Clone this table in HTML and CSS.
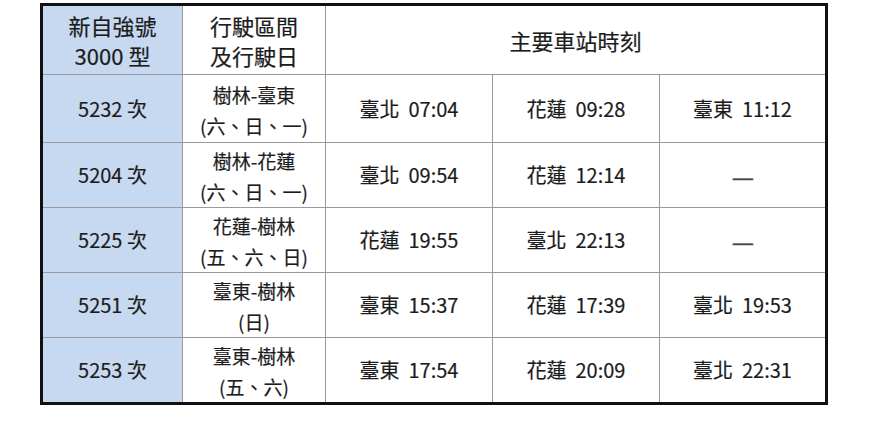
FILE: index.html
```html
<!DOCTYPE html>
<html lang="zh-Hant">
<head>
<meta charset="utf-8">
<link rel="stylesheet" href="styles.css">
</head>
<body>
<table class="timetable">
  <colgroup>
    <col class="c-train"><col class="c-route"><col class="c-st"><col class="c-st"><col class="c-st">
  </colgroup>
  <thead>
    <tr class="head-row">
      <th class="train">新自強號<br>3000 型</th>
      <th class="route-h">行駛區間<br>及行駛日</th>
      <th colspan="3" class="main-h">主要車站時刻</th>
    </tr>
  </thead>
  <tbody>
    <tr class="r1">
      <td class="train">5232 次</td>
      <td class="route">樹林-臺東<br>(六、日、一)</td>
      <td>臺北&nbsp;&nbsp;07:04</td>
      <td>花蓮&nbsp;&nbsp;09:28</td>
      <td>臺東&nbsp;&nbsp;11:12</td>
    </tr>
    <tr class="r2">
      <td class="train">5204 次</td>
      <td class="route">樹林-花蓮<br>(六、日、一)</td>
      <td>臺北&nbsp;&nbsp;09:54</td>
      <td>花蓮&nbsp;&nbsp;12:14</td>
      <td class="dash"><span class="dash-mark">—</span></td>
    </tr>
    <tr class="r3">
      <td class="train">5225 次</td>
      <td class="route">花蓮-樹林<br>(五、六、日)</td>
      <td>花蓮&nbsp;&nbsp;19:55</td>
      <td>臺北&nbsp;&nbsp;22:13</td>
      <td class="dash"><span class="dash-mark">—</span></td>
    </tr>
    <tr class="r4">
      <td class="train">5251 次</td>
      <td class="route">臺東-樹林<br>(日)</td>
      <td>臺東&nbsp;&nbsp;15:37</td>
      <td>花蓮&nbsp;&nbsp;17:39</td>
      <td>臺北&nbsp;&nbsp;19:53</td>
    </tr>
    <tr class="r5">
      <td class="train">5253 次</td>
      <td class="route">臺東-樹林<br>(五、六)</td>
      <td>臺東&nbsp;&nbsp;17:54</td>
      <td>花蓮&nbsp;&nbsp;20:09</td>
      <td>臺北&nbsp;&nbsp;22:31</td>
    </tr>
  </tbody>
</table>
</body>
</html>
```
FILE: styles.css
```css
html, body {
  margin: 0;
  padding: 0;
  background: #ffffff;
}

body {
  font-family: "Noto Sans CJK TC", "Noto Sans", sans-serif;
  color: #1c1c1c;
}

.timetable {
  border-collapse: collapse;
  table-layout: fixed;
  width: 787px;
  margin: 3px 0 0 40px;
  border: 3px solid #111111;
}

.c-train { width: 141px; }
.c-route { width: 143px; }
.c-st { width: 167px; }

.timetable th,
.timetable td {
  border: 1px solid #9a9a9a;
  padding: 0;
  text-align: center;
  vertical-align: middle;
  font-weight: 400;
  -webkit-text-stroke: 0.2px #1c1c1c;
}

.timetable th {
  font-size: 22px;
  line-height: 30px;
}

.timetable td {
  font-size: 20px;
  line-height: 28px;
}

.timetable .train {
  background: #c6d9f1;
}

.head-row { height: 70px; }
.r1 { height: 68px; }
.r2 { height: 64px; }
.r3 { height: 65px; }
.r4 { height: 65px; }
.r5 { height: 65px; }

.timetable td.route {
  font-size: 19px;
  line-height: 31px;
  padding-top: 2px;
}

.timetable td.dash {
  color: #444444;
  -webkit-text-stroke: 0.4px #444444;
}

.dash-mark {
  display: inline-block;
  transform: translateY(2px) scaleX(1.25);
}
```
